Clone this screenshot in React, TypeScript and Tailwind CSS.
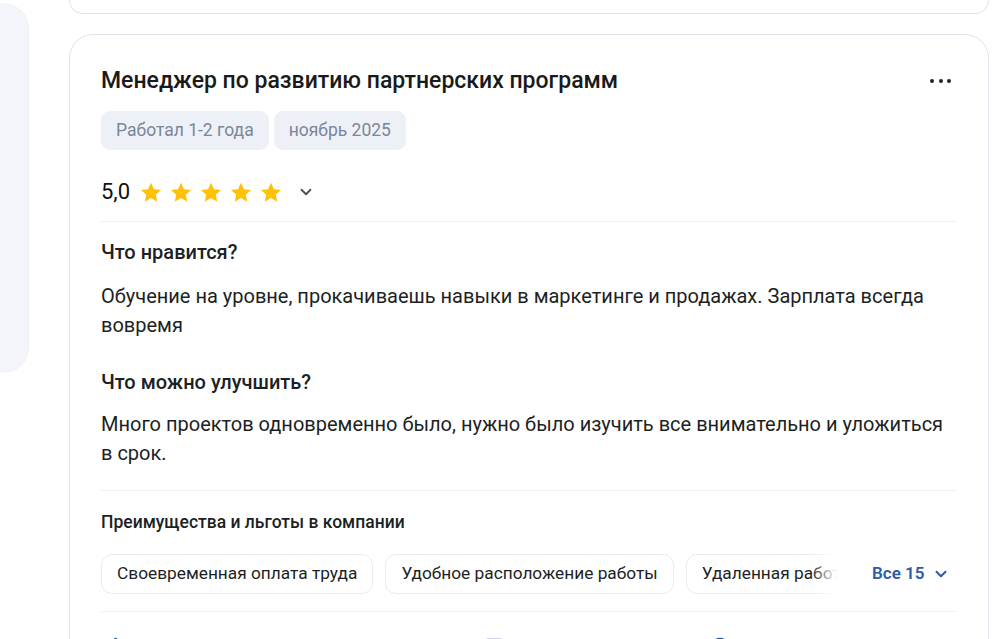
import React from "react";
import { ChevronDown, ThumbsUp, MessageSquare, CircleAlert } from "lucide-react";

function Star() {
  return (
    <svg width="22" height="21" viewBox="0 0 24 23" className="shrink-0">
      <path
        d="M12 0.8l3.3 7.1 7.7.8-5.8 5.2 1.7 7.6L12 17.6l-6.9 3.9 1.7-7.6L1 8.7l7.7-.8z"
        fill="#ffc107"
      />
    </svg>
  );
}

export default function App() {
  const font = { fontFamily: "Roboto, 'Noto Sans', 'Liberation Sans', sans-serif" };
  return (
    <div
      className="w-[1004px] h-[639px] overflow-hidden bg-white flex items-start text-[#1d1f23]"
      style={font}
    >
      <div className="w-[29px] shrink-0 pt-[3px]">
        <div className="h-[370px] w-full bg-[#f4f5fa] rounded-r-[26px] border-r border-[#eceef4]" />
      </div>
      <div className="ml-[40px] w-[920px] shrink-0 flex flex-col">
        <div className="h-[14px] shrink-0 border border-t-0 border-[#dfe3eb] rounded-b-[24px]" />
        <div className="mt-[20px] shrink-0 border border-[#dfe3eb] rounded-[24px] px-[31px] pt-[32px] pb-[20px]">
          <div className="flex items-center justify-between">
            <h2 className="text-[23px] leading-[28px] font-medium text-[#1a1a1a]">
              Менеджер по развитию партнерских программ
            </h2>
            <div className="flex items-center gap-[4.5px] mr-[6px]">
              <span className="w-[4px] h-[4px] rounded-full bg-[#1f2328]" />
              <span className="w-[4px] h-[4px] rounded-full bg-[#1f2328]" />
              <span className="w-[4px] h-[4px] rounded-full bg-[#1f2328]" />
            </div>
          </div>
          <div className="mt-[16px] flex gap-[5px]">
            <span className="h-[39px] px-[15px] flex items-center rounded-[9px] bg-[#edf0f7] text-[#7a8699] text-[17.5px]">
              Работал 1-2 года
            </span>
            <span className="h-[39px] px-[15px] flex items-center rounded-[9px] bg-[#edf0f7] text-[#7a8699] text-[17.5px]">
              ноябрь 2025
            </span>
          </div>
          <div className="mt-[26px] h-[32px] flex items-center">
            <span className="text-[22px] leading-none text-[#111]">5,0</span>
            <div className="ml-[10px] flex items-center gap-[8px]">
              <Star />
              <Star />
              <Star />
              <Star />
              <Star />
            </div>
            <ChevronDown className="ml-[15px] text-[#4b5058]" size={18} strokeWidth={2.4} />
          </div>
          <div className="mt-[13px] h-px bg-[#eef0f4]" />
          <h3 className="mt-[18px] text-[20px] leading-[24px] font-medium">Что нравится?</h3>
          <p className="mt-[18px] text-[20px] leading-[29px]">
            Обучение на уровне, прокачиваешь навыки в маркетинге и продажах. Зарплата всегда вовремя
          </p>
          <h3 className="mt-[30px] text-[20px] leading-[24px] font-medium">Что можно улучшить?</h3>
          <p className="mt-[16px] text-[20px] leading-[29px]">
            Много проектов одновременно было, нужно было изучить все внимательно и уложиться в срок.
          </p>
          <div className="mt-[22px] h-px bg-[#eef0f4]" />
          <h4 className="mt-[21px] text-[17.5px] leading-[20px] font-medium">
            Преимущества и льготы в компании
          </h4>
          <div className="mt-[22px] flex items-center">
            <div className="relative w-[736px] shrink-0 overflow-hidden">
              <div className="flex gap-[12px]">
                {["Своевременная оплата труда", "Удобное расположение работы", "Удаленная работа", "Обучение"].map(
                  (t) => (
                    <span
                      key={t}
                      className="h-[40px] px-[15px] shrink-0 flex items-center rounded-[11px] border border-[#e8ebf2] bg-white text-[17.3px] whitespace-nowrap"
                    >
                      {t}
                    </span>
                  )
                )}
              </div>
              <div className="absolute right-0 top-0 h-full w-[26px] bg-gradient-to-r from-white/0 to-white" />
            </div>
            <button className="ml-[35px] shrink-0 flex items-center gap-[8px] text-[#2e5aa6] text-[17px] font-semibold">
              Все 15
              <ChevronDown size={18} strokeWidth={2.6} />
            </button>
          </div>
          <div className="mt-[17px] h-px bg-[#eef0f4]" />
          <div className="mt-[25px] h-[20px] flex items-center text-[#2e5aa6]">
            <div className="ml-[4px] flex items-center gap-2">
              <ThumbsUp size={20} />
              <span className="text-[17px] leading-[20px]">Полезно</span>
            </div>
            <div className="ml-[282px] flex items-center gap-2">
              <MessageSquare size={20} />
              <span className="text-[17px] leading-[20px]">Комментировать</span>
            </div>
            <div className="ml-[60px] flex items-center gap-2">
              <CircleAlert size={20} />
              <span className="text-[17px] leading-[20px]">Пожаловаться</span>
            </div>
          </div>
        </div>
      </div>
    </div>
  );
}
